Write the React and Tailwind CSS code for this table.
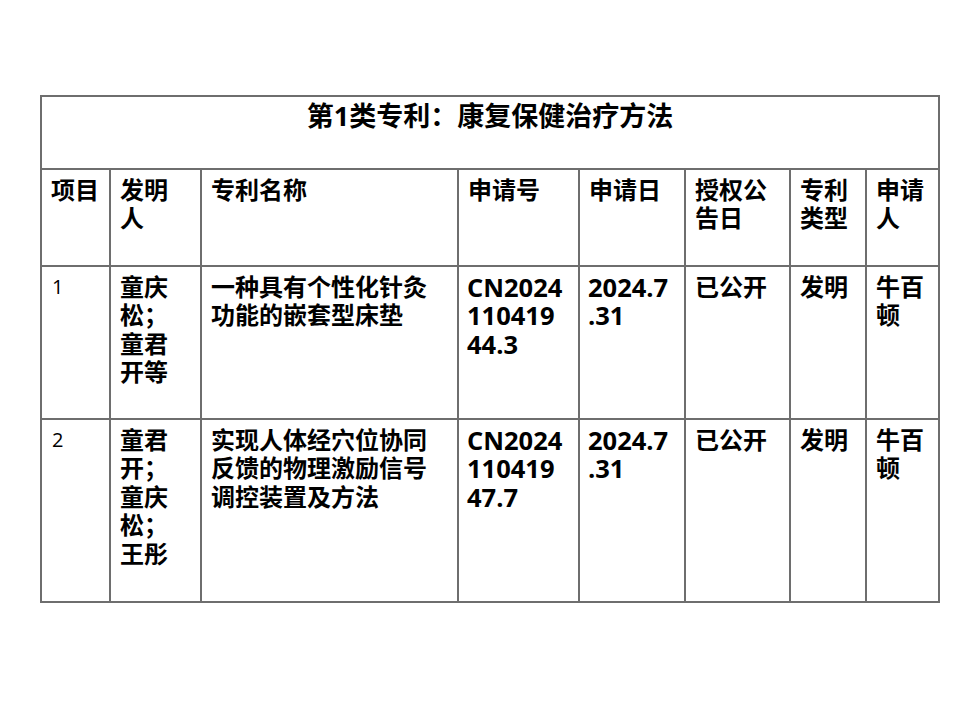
import React from "react";

const cols = [69, 91, 257, 121, 106, 105, 76, 73];

const cell =
  "border-2 border-[#6e6e6e] align-top pl-[9px] pr-[4px] pt-[6px] text-[24px] leading-[28.4px] font-bold text-black";
const latinCell =
  "border-2 border-[#6e6e6e] align-top pl-[8px] pr-[2px] pt-[6px] text-[25.5px] leading-[28.4px] font-bold text-black";

function Lines({ lines }) {
  return (
    <>
      {lines.map((l, i) => (
        <React.Fragment key={i}>
          {i > 0 && <br />}
          {l}
        </React.Fragment>
      ))}
    </>
  );
}

const rows = [
  {
    no: "1",
    inv: ["童庆", "松；", "童君", "开等"],
    name: ["一种具有个性化针灸", "功能的嵌套型床垫"],
    app: ["CN2024", "110419", "44.3"],
    date: ["2024.7", ".31"],
    h: 153,
  },
  {
    no: "2",
    inv: ["童君", "开；", "童庆", "松；", "王彤"],
    name: ["实现人体经穴位协同", "反馈的物理激励信号", "调控装置及方法"],
    app: ["CN2024", "110419", "47.7"],
    date: ["2024.7", ".31"],
    h: 183,
  },
];

export default function App() {
  return (
    <div className="w-[960px] h-[720px] bg-white pt-[95px] pl-[40px] font-['Open_Sans','Noto_Sans_CJK_SC',sans-serif]">
      <table className="border-collapse table-fixed w-[900px]">
        <colgroup>
          {cols.map((w, i) => (
            <col key={i} style={{ width: w }} />
          ))}
        </colgroup>
        <tbody>
          <tr className="h-[73px]">
            <td
              colSpan={8}
              className="border-2 border-[#6e6e6e] align-top text-center pt-[3px] text-[27px] leading-[32px] font-bold text-black"
            >
              第1类专利：康复保健治疗方法
            </td>
          </tr>
          <tr className="h-[97px]">
            <td className={cell}>项目</td>
            <td className={cell}>
              <Lines lines={["发明", "人"]} />
            </td>
            <td className={cell}>专利名称</td>
            <td className={cell}>申请号</td>
            <td className={cell}>申请日</td>
            <td className={cell}>
              <Lines lines={["授权公", "告日"]} />
            </td>
            <td className={cell}>
              <Lines lines={["专利", "类型"]} />
            </td>
            <td className={cell}>
              <Lines lines={["申请", "人"]} />
            </td>
          </tr>
          {rows.map((r) => (
            <tr key={r.no} style={{ height: r.h }}>
              <td className="border-2 border-[#6e6e6e] align-top pl-[10px] pt-[6px] text-[20px] leading-[28.4px] font-normal text-black">
                {r.no}
              </td>
              <td className={cell}>
                <Lines lines={r.inv} />
              </td>
              <td className={cell}>
                <Lines lines={r.name} />
              </td>
              <td className={latinCell}>
                <Lines lines={r.app} />
              </td>
              <td className={latinCell}>
                <Lines lines={r.date} />
              </td>
              <td className={cell}>已公开</td>
              <td className={cell}>发明</td>
              <td className={cell}>
                <Lines lines={["牛百", "顿"]} />
              </td>
            </tr>
          ))}
        </tbody>
      </table>
    </div>
  );
}
